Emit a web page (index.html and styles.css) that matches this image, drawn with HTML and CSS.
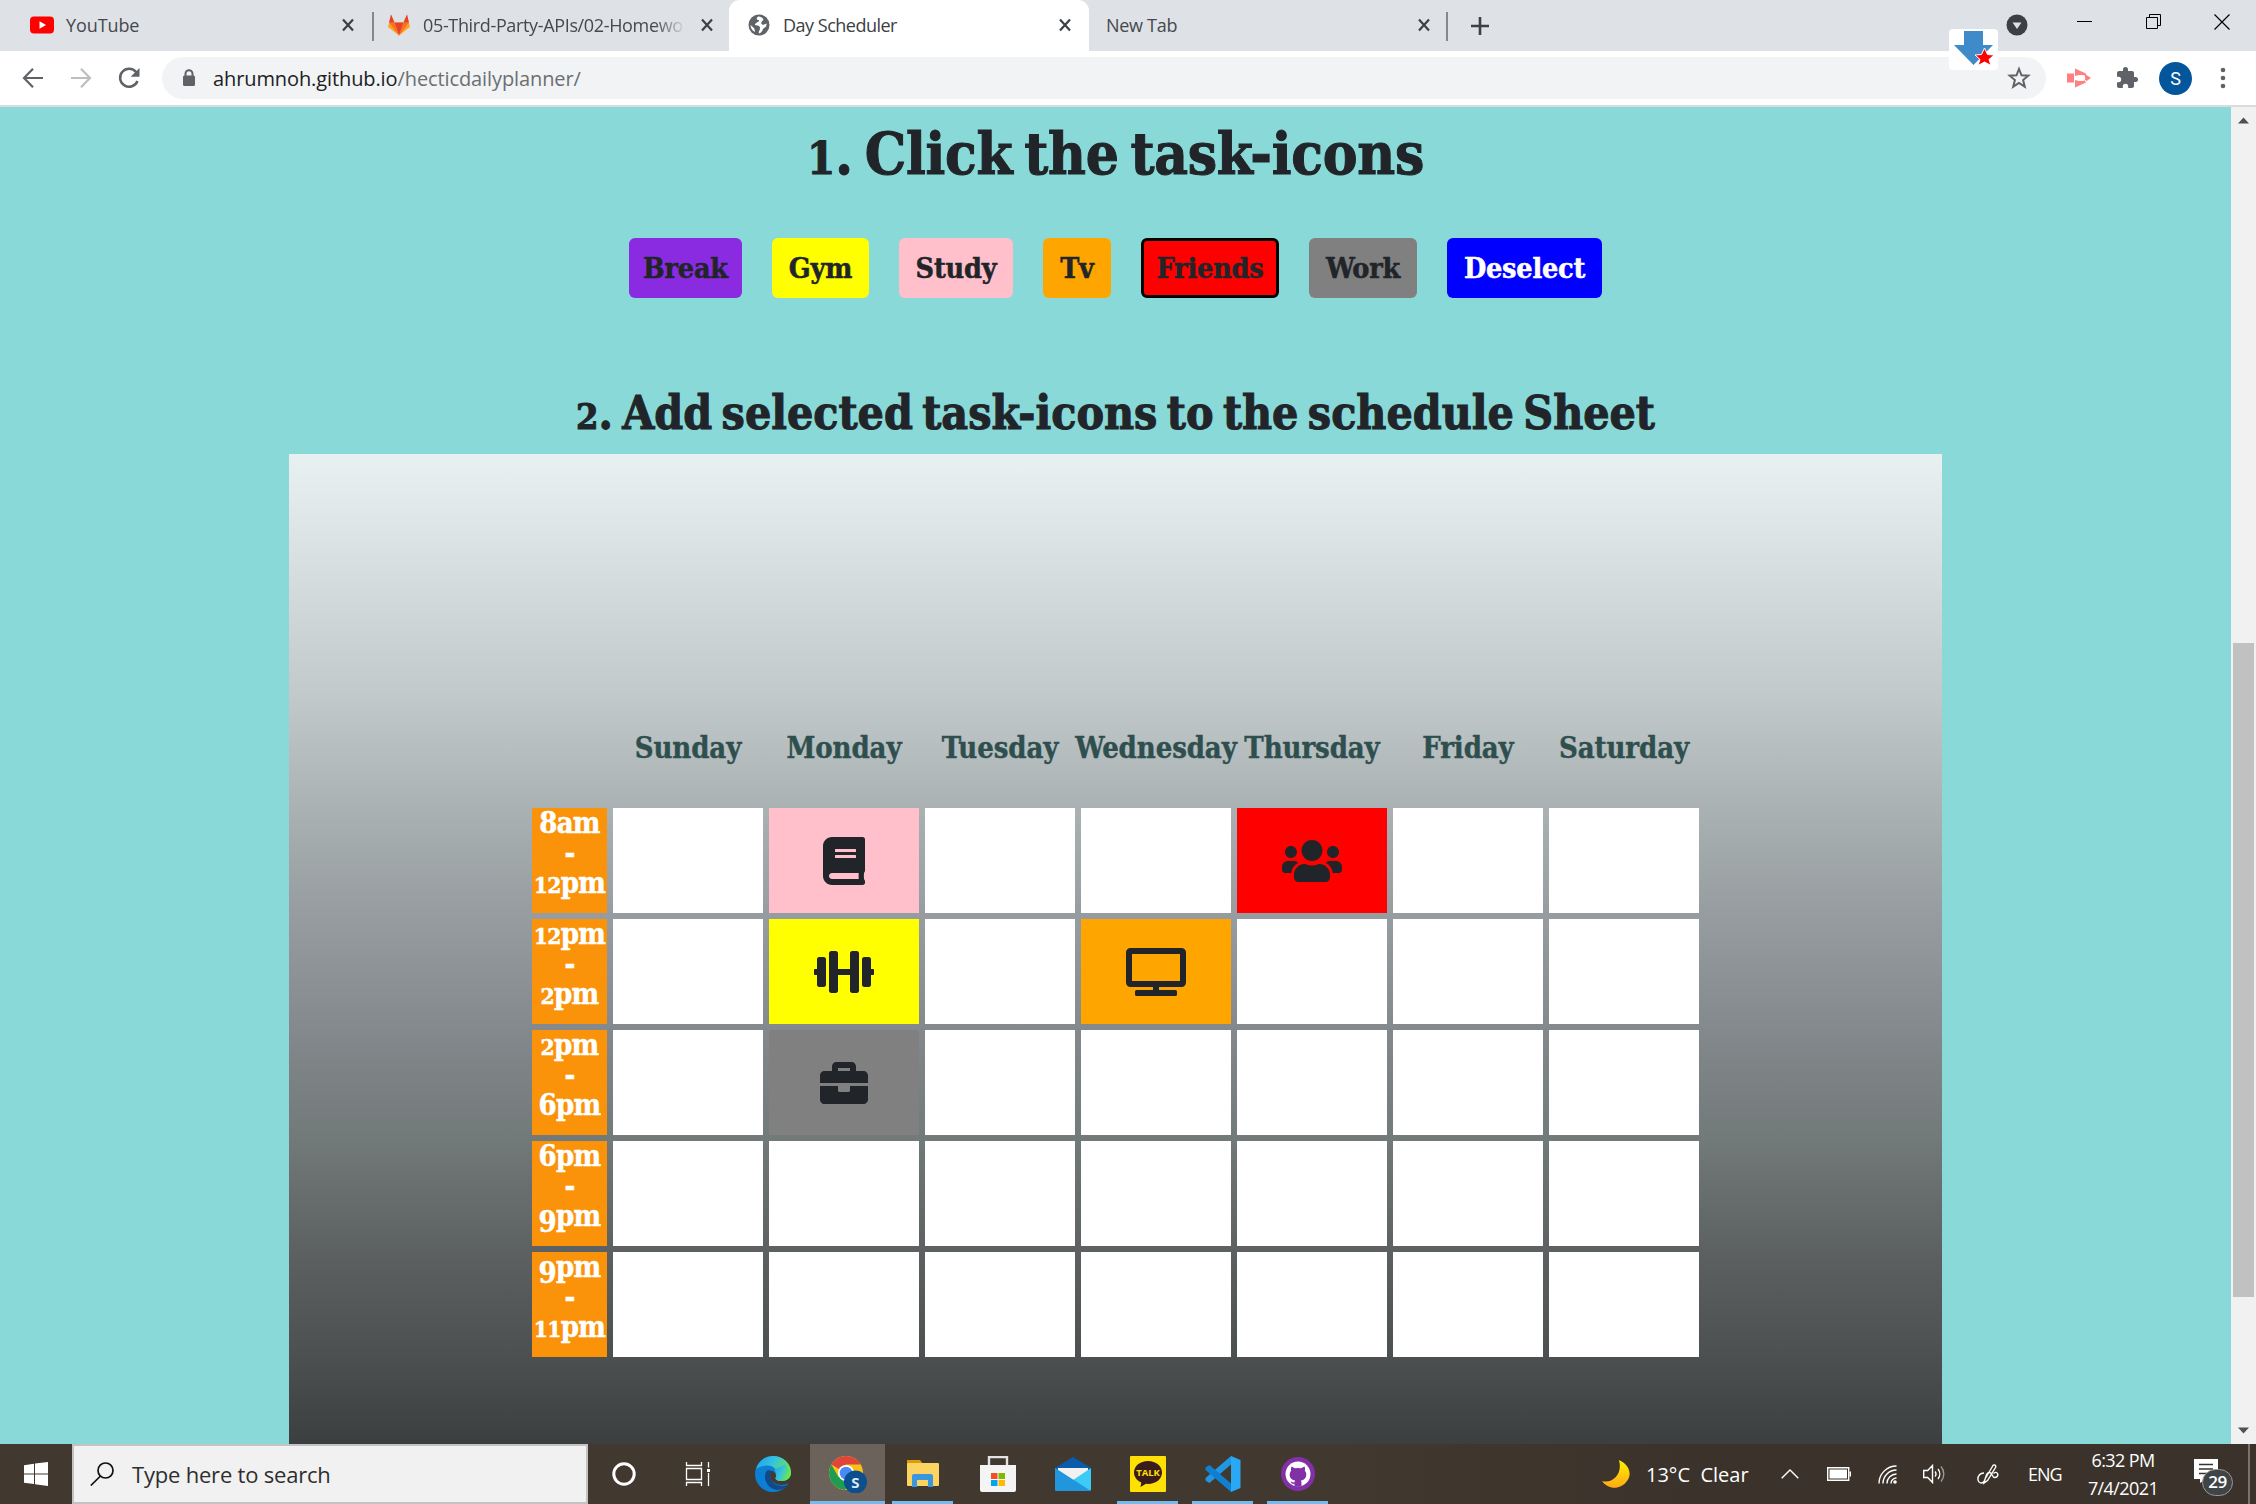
FILE: index.html
```html
<!DOCTYPE html>
<html lang="en">
<head>
<meta charset="utf-8">
<title>Day Scheduler</title>
<link rel="stylesheet" href="styles.css">
</head>
<body>
<svg width="0" height="0" class="defs">
  <defs>
    <symbol id="x" viewBox="0 0 14 14"><path d="M2 1.500L12 12.500M12 1.500L2 12.500" stroke="#3c4043" stroke-width="2.200" fill="none"/></symbol>
    <linearGradient id="edgeTop" x1="0" y1="0" x2="1" y2="0.400"><stop offset="0" stop-color="#1f9fe8"/><stop offset=".5" stop-color="#35c1e0"/><stop offset="1" stop-color="#6ae94a"/></linearGradient>
    <linearGradient id="moonFill" x1="0" y1="0" x2="0" y2="1"><stop offset="0" stop-color="#fff000"/><stop offset="1" stop-color="#ffa914"/></linearGradient>
  </defs>
</svg>

<header class="browser">
  <div class="tabstrip">
    <div class="tab">
      <svg class="fav" viewBox="0 0 24 24"><rect y="3.500" width="24" height="17" rx="4" fill="#f00"/><path d="M9.500 8.200v7.600l6.500-3.800z" fill="#fff"/></svg>
      <span class="tab-name t-yt">YouTube</span>
      <svg class="close"><use href="#x"/></svg>
    </div>
    <div class="tab lined">
      <svg class="fav" viewBox="0 0 24 24"><path d="M12 22.500L1 14 4 1.500 7.500 9.500h9L20 1.500 23 14z" fill="#fca326"/><path d="M12 22.500L7.500 9.500h9z" fill="#e24329"/><path d="M12 22.500L7.500 9.500H2.100zM12 22.500l4.500-13h5.400z" fill="#fc6d26"/><path d="M4 1.500L2.100 9.500h5.400zM20 1.500l1.900 8h-5.400z" fill="#e24329"/></svg>
      <span class="tab-name t-gl fade">05-Third-Party-APIs/02-Homewo</span>
      <svg class="close"><use href="#x"/></svg>
    </div>
    <div class="tab active">
      <svg class="fav" viewBox="0 0 24 24"><circle cx="12" cy="12" r="10.500" fill="#5f6368"/><path d="M11 3.500c-2.500 2.500-1 3.500 1 3.500 0 3-4 2-4 5 2 1 5 0 5 3s-2 3-1 5.500c4-1 3-5 6-6 2-1.500 1.500-4 1.500-4-2 1-4 2-5 .5s1-3 2-4.500C15 4 13 3.300 11 3.500zM3.500 12c1 1 3 2 4 4l.5 3c-3-1.500-4.500-4-4.500-7z" fill="#fff"/></svg>
      <span class="tab-name t-ds">Day Scheduler</span>
      <svg class="close"><use href="#x"/></svg>
    </div>
    <div class="tab newtab">
      <span class="tab-name t-nt">New Tab</span>
      <svg class="close"><use href="#x"/></svg>
    </div>
    <svg class="plus" viewBox="0 0 20 20"><path d="M10 1v18M1 10h18" stroke="#3c4043" stroke-width="2.600"/></svg>
    <div class="window-controls">
      <svg class="drop" viewBox="0 0 22 22"><circle cx="11" cy="11" r="10.500" fill="#3c4043"/><path d="M6.500 8.500h9L11 15z" fill="#dee1e6"/></svg>
      <svg class="ctl" viewBox="0 0 16 16"><path d="M0 7.500h15" stroke="#000"/></svg>
      <svg class="ctl" viewBox="0 0 16 16"><path d="M.5 3.500h11v11H.5zM3.500 3.500v-3h11v11h-3" fill="none" stroke="#000"/></svg>
      <svg class="ctl" viewBox="0 0 16 16"><path d="M.5.5l15 15M15.500.5l-15 15" stroke="#000" stroke-width="1.200"/></svg>
    </div>
  </div>
  <div class="toolbar">
    <svg class="nav" viewBox="0 0 22 22"><path d="M21 11H2M11 1.800L2 11l9 9.200" fill="none" stroke="#5f6368" stroke-width="2.200"/></svg>
    <svg class="nav" viewBox="0 0 22 22"><path d="M1 11h19M11 1.800L20 11l-9 9.200" fill="none" stroke="#bcbec1" stroke-width="2.200"/></svg>
    <svg class="nav" viewBox="0 0 22 22"><path d="M18.200 5.200A9 9 0 1 0 19.500 14" fill="none" stroke="#5f6368" stroke-width="2.500"/><path d="M21.500 1v8.800h-8.800z" fill="#5f6368"/></svg>
    <div class="omnibox">
      <svg class="lock" viewBox="0 0 14 18"><path d="M3.500 7V4.800a3.500 3.500 0 0 1 7 0V7" fill="none" stroke="#5f6368" stroke-width="2"/><rect x="1" y="6.500" width="12" height="10.500" rx="1.500" fill="#5f6368"/></svg>
      <span class="url">ahrumnoh.github.io<span class="path">/hecticdailyplanner/</span></span>
      <svg class="star" viewBox="0 0 24 24"><path d="M12 3l2.500 6.300 6.800.4-5.200 4.400 1.700 6.600-5.800-3.700-5.800 3.700 1.700-6.600L2.700 9.700l6.800-.4z" fill="none" stroke="#5f6368" stroke-width="2"/></svg>
    </div>
    <svg class="ext" viewBox="0 0 24 20"><path d="M0 5.500h7v9H0zM8 .5l11 5v2.500l-3-1h-4L8 8zM8 19.500l11-5V12l-3 1h-4L8 12zM18 6l6 4-6 4z" fill="#ff8080"/></svg>
    <svg class="puzzle" viewBox="1 1 22 22"><path d="M20.500 11H19V7c0-1.100-.9-2-2-2h-4V3.500a2.500 2.500 0 0 0-5 0V5H4c-1.100 0-2 .9-2 2v3.800h1.500a2.700 2.700 0 0 1 0 5.400H2V20c0 1.100.9 2 2 2h3.800v-1.500a2.700 2.700 0 0 1 5.400 0V22H17c1.100 0 2-.9 2-2v-4h1.500a2.500 2.500 0 0 0 0-5z" fill="#5f6368"/></svg>
    <span class="avatar">S</span>
    <svg class="dots" viewBox="0 0 6 22"><circle cx="3" cy="3" r="2.300"/><circle cx="3" cy="11" r="2.300"/><circle cx="3" cy="19" r="2.300"/></svg>
  </div>
  <svg class="download-badge" viewBox="0 0 49 41"><rect width="49" height="41" rx="4" fill="#fff"/><path d="M15 2h19v14h10L24.500 36 5 16h10z" fill="#3f8ac9"/><path d="M35.500 19l3 6.500 6.500.5-5 4.500 2 6-6.500-3.500-6.500 3.500 2-6-5-4.500 6.500-.5z" fill="red" stroke="#fff"/></svg>
</header>

<div class="viewport">
  <main class="page">
    <h1 class="step-one"><span class="fig">1</span>. Click the task-icons</h1>
    <div class="tasks">
      <button class="task break">Break</button>
      <button class="task gym">Gym</button>
      <button class="task study">Study</button>
      <button class="task tv">Tv</button>
      <button class="task friends selected">Friends</button>
      <button class="task work">Work</button>
      <button class="task deselect">Deselect</button>
    </div>
    <h2 class="step-two"><span class="fig">2</span>. Add selected task-icons to the schedule Sheet</h2>
    <section class="sheet">
      <div class="days">
        <span></span><span>Sunday</span><span>Monday</span><span>Tuesday</span><span>Wednesday</span><span>Thursday</span><span>Friday</span><span>Saturday</span>
      </div>
      <div class="grid">
        <div class="time">8am<br>-<br><span class="fig">12</span>pm</div>
        <div class="cell"></div>
        <div class="cell study"><svg width="42" height="48" viewBox="0 0 448 512"><path d="M448 360V24c0-13.300-10.700-24-24-24H96C43 0 0 43 0 96v320c0 53 43 96 96 96h328c13.300 0 24-10.700 24-24v-16c0-7.500-3.500-14.300-8.900-18.700-4.200-15.400-4.200-59.300 0-74.700 5.400-4.300 8.900-11.100 8.900-18.600zM128 134c0-3.300 2.700-6 6-6h212c3.300 0 6 2.700 6 6v20c0 3.300-2.700 6-6 6H134c-3.300 0-6-2.700-6-6v-20zm0 64c0-3.300 2.700-6 6-6h212c3.300 0 6 2.700 6 6v20c0 3.300-2.700 6-6 6H134c-3.300 0-6-2.700-6-6v-20zm253.400 250H96c-17.700 0-32-14.300-32-32 0-17.600 14.400-32 32-32h285.400c-1.900 17.100-1.900 46.900 0 64z"/></svg></div>
        <div class="cell"></div>
        <div class="cell"></div>
        <div class="cell friends"><svg width="60" height="48" viewBox="0 0 640 512"><path d="M96 224c35.300 0 64-28.700 64-64s-28.700-64-64-64-64 28.700-64 64 28.700 64 64 64zm448 0c35.300 0 64-28.700 64-64s-28.700-64-64-64-64 28.700-64 64 28.700 64 64 64zm32 32h-64c-17.600 0-33.500 7.100-45.100 18.600 40.300 22.100 68.900 62 75.100 109.400h66c17.700 0 32-14.300 32-32v-32c0-35.300-28.700-64-64-64zm-256 0c61.900 0 112-50.100 112-112S381.900 32 320 32 208 82.100 208 144s50.100 112 112 112zm76.800 32h-8.300c-20.800 10-43.900 16-68.500 16s-47.600-6-68.500-16h-8.300C179.600 288 128 339.600 128 403.200V432c0 26.500 21.500 48 48 48h288c26.500 0 48-21.500 48-48v-28.800c0-63.600-51.600-115.200-115.200-115.200zm-223.700-13.400C161.500 263.100 145.600 256 128 256H64c-35.300 0-64 28.700-64 64v32c0 17.700 14.300 32 32 32h65.900c6.300-47.400 34.900-87.300 75.200-109.400z"/></svg></div>
        <div class="cell"></div>
        <div class="cell"></div>

        <div class="time"><span class="fig">12</span>pm<br>-<br><span class="fig">2</span>pm</div>
        <div class="cell"></div>
        <div class="cell gym"><svg width="60" height="48" viewBox="0 0 640 512"><path d="M104 96H56c-13.300 0-24 10.700-24 24v104H8c-4.400 0-8 3.600-8 8v48c0 4.400 3.600 8 8 8h24v104c0 13.300 10.700 24 24 24h48c13.300 0 24-10.700 24-24V120c0-13.300-10.700-24-24-24zm528 128h-24V120c0-13.300-10.700-24-24-24h-48c-13.300 0-24 10.700-24 24v272c0 13.300 10.700 24 24 24h48c13.300 0 24-10.700 24-24V288h24c4.400 0 8-3.600 8-8v-48c0-4.400-3.600-8-8-8zM456 32h-48c-13.300 0-24 10.700-24 24v168H256V56c0-13.300-10.700-24-24-24h-48c-13.300 0-24 10.700-24 24v400c0 13.300 10.700 24 24 24h48c13.300 0 24-10.700 24-24V288h128v168c0 13.300 10.700 24 24 24h48c13.300 0 24-10.700 24-24V56c0-13.300-10.700-24-24-24z"/></svg></div>
        <div class="cell"></div>
        <div class="cell tv"><svg width="60" height="48" viewBox="0 0 640 512"><path d="M592 0H48A48 48 0 0 0 0 48v320a48 48 0 0 0 48 48h240v32H112a16 16 0 0 0-16 16v32a16 16 0 0 0 16 16h416a16 16 0 0 0 16-16v-32a16 16 0 0 0-16-16H352v-32h240a48 48 0 0 0 48-48V48a48 48 0 0 0-48-48zm-16 352H64V64h512z"/></svg></div>
        <div class="cell"></div>
        <div class="cell"></div>
        <div class="cell"></div>

        <div class="time"><span class="fig">2</span>pm<br>-<br>6pm</div>
        <div class="cell"></div>
        <div class="cell work"><svg width="48" height="48" viewBox="0 0 512 512"><path d="M320 336c0 8.840-7.160 16-16 16h-96c-8.840 0-16-7.160-16-16v-48H0v144c0 25.600 22.400 48 48 48h416c25.600 0 48-22.400 48-48V288H320v48zm144-208h-80V80c0-25.600-22.400-48-48-48H176c-25.600 0-48 22.400-48 48v48H48c-25.600 0-48 22.400-48 48v80h512v-80c0-25.600-22.400-48-48-48zm-144 0H192V96h128v32z"/></svg></div>
        <div class="cell"></div>
        <div class="cell"></div>
        <div class="cell"></div>
        <div class="cell"></div>
        <div class="cell"></div>

        <div class="time">6pm<br>-<br><span class="low">9</span>pm</div>
        <div class="cell"></div><div class="cell"></div><div class="cell"></div><div class="cell"></div><div class="cell"></div><div class="cell"></div><div class="cell"></div>

        <div class="time"><span class="low">9</span>pm<br>-<br><span class="fig">11</span>pm</div>
        <div class="cell"></div><div class="cell"></div><div class="cell"></div><div class="cell"></div><div class="cell"></div><div class="cell"></div><div class="cell"></div>
      </div>
    </section>
  </main>
  <div class="scrollbar">
    <svg width="11" height="7" viewBox="0 0 11 7"><path d="M0 6.500L5.500.5l5.500 6z" fill="#505050"/></svg>
    <div class="thumb"></div>
    <svg class="down" width="11" height="7" viewBox="0 0 11 7"><path d="M0 .5h11l-5.500 6z" fill="#505050"/></svg>
  </div>
</div>

<footer class="taskbar">
  <div class="start"><svg width="24" height="24" viewBox="0 0 24 24"><path d="M0 3.200L10 1.800v9.600H0zM11 1.600L24 0v11.400H11zM0 12.400h10v9.700L0 20.700zM11 12.400h13V24l-13-1.700z" fill="#fff"/></svg></div>
  <div class="search">
    <svg width="24" height="24" viewBox="0 0 24 24"><circle cx="15.500" cy="8.500" r="7.500" fill="none" stroke="#111" stroke-width="1.700"/><path d="M10.500 14L.8 23.500" stroke="#111" stroke-width="1.700"/></svg>
    <span>Type here to search</span>
  </div>
  <div class="apps">
    <div class="app narrow"><svg width="24" height="24" viewBox="0 0 24 24"><circle cx="12" cy="12" r="10.200" fill="none" stroke="#fff" stroke-width="3"/></svg></div>
    <div class="app view"><svg width="26" height="24" viewBox="0 0 26 24"><path d="M1.500 0v3.500h15V0M1.500 24v-3.500h15V24M1.500 6.500h15v11h-15zM23.500 0v5.500M23.500 11v13" fill="none" stroke="#fff" stroke-width="1.300"/><path d="M22 7h3v3h-3z" fill="#fff"/></svg></div>
    <div class="app"><svg width="36" height="36" viewBox="0 0 36 36"><circle cx="18" cy="18" r="18" fill="#0b7fd3"/><path d="M1 13C4 4 11 0 18 0c10 0 18 7.500 18 16 0 6-4 9-9.500 9-4 0-6.500-1.500-6-3 3-2.500 2-12.500-8.500-12.500C7 9.500 3 12 1 13z" fill="url(#edgeTop)"/><path d="M12 14.500c-4 5-2 14 5 18 6 3 12 1 16.500-4-6 3-14 1-17-4-1.500-3-1.500-6 0-9-1.500-1.500-3-2-4.500-1z" fill="#114a8b"/><path d="M16.500 14.500c-2 3-2 8 1 11 4 4 11 4.500 16.500 1.500l2-3v-5c-2 5-6 6-9.500 6-4 0-6.500-1.500-6-3 1.500-2 0-6-4-7.500z" fill="#433931"/><path d="M19 14c2.500 2 2.500 6 1.500 8-.5 1.500 2 3 6 3 5.500 0 9.500-3 9.500-9l-6-8z" fill="url(#edgeTop)"/></svg></div>
    <div class="app current open"><svg width="38" height="38" viewBox="0 0 38 38"><circle cx="17" cy="18" r="17" fill="#fbc116"/><path d="M17 1a17 17 0 0 1 14.700 8.500H17L10 14 2.300 9.500A17 17 0 0 1 17 1z" fill="#e0453a"/><path d="M2.300 9.500A17 17 0 0 0 16 35l7-13-13.500 0z" fill="#1e9c50"/><circle cx="17" cy="18" r="8" fill="#fff"/><circle cx="17" cy="18" r="6.300" fill="#4a8af4"/><circle cx="26.500" cy="27" r="11.500" fill="#0b4f8f"/><text x="26.500" y="32.500" text-anchor="middle" class="badge-s">S</text></svg></div>
    <div class="app open wide"><svg width="34" height="28" viewBox="0 0 34 28"><path d="M1 0h13l3 4H1z" fill="#e09c08"/><rect x="1" y="3" width="32" height="23" rx="1" fill="#fcd462"/><path d="M6 26V16a2 2 0 0 1 2-2h17a2 2 0 0 1 2 2v11h-5v-7H11v7H6z" fill="#3a96dd"/></svg></div>
    <div class="app"><svg width="36" height="36" viewBox="0 0 36 36"><path d="M9 11V1h18v10" fill="none" stroke="#e3e3e3" stroke-width="2.400"/><path d="M0 9h36v25a2 2 0 0 1-2 2H2a2 2 0 0 1-2-2z" fill="#f4f4f4"/><path d="M11 17h6.500v6H11z" fill="#f25022"/><path d="M18.500 17H25v6h-6.500z" fill="#7fba00"/><path d="M11 24h6.500v6H11z" fill="#00a4ef"/><path d="M18.500 24H25v6h-6.500z" fill="#ffb900"/></svg></div>
    <div class="app"><svg width="36" height="34" viewBox="0 0 36 34"><path d="M0 11L18 0l18 11v4H0z" fill="#0a5bab"/><path d="M3 11h30v12H3z" fill="#f1f1f1"/><path d="M0 11l18 12L36 11v21a2 2 0 0 1-2 2H2a2 2 0 0 1-2-2z" fill="#3ccbf4"/><path d="M0 11l36 23H2a2 2 0 0 1-2-2z" fill="#2196dc"/></svg></div>
    <div class="app open wide"><svg width="36" height="36" viewBox="0 0 36 36"><rect width="36" height="36" rx="1" fill="#fee102"/><path d="M18 5c8 0 14 5 14 11.500S26 28 18 28l-2-.2L10.500 31l.8-4.400C7 24.500 4 21 4 16.500 4 10 10 5 18 5z" fill="#3b1c1c"/><text x="18" y="20.300" text-anchor="middle" class="talk">TALK</text></svg></div>
    <div class="app open wide"><svg width="36" height="36" viewBox="0 0 36 36"><path d="M26 8.500L4.500 27 .5 24.500V22L26 0z" fill="#2196e3"/><path d="M26 27.500L4.500 9 .5 11.500V14L26 36z" fill="#0f7fcf"/><path d="M26 0l9.500 4v28L26 36z" fill="#2ba8f5"/></svg></div>
    <div class="app open wide"><svg width="34" height="34" viewBox="0 0 34 34"><circle cx="17" cy="17" r="17" fill="#8330a8"/><circle cx="17" cy="17" r="12.500" fill="#fff"/><path d="M10.500 9.500l3.500 1.800a14 14 0 0 1 6 0l3.500-1.800c.8 2 .6 3 .3 4 3.500 5 .5 9.500-4 10 .8 1 .7 2 .7 5.700a12.500 12.500 0 0 1-7 0V26.800c-2.500.4-3.300-.8-4-2.300 1.700 0 2 1.200 4 .8 0-.8.300-1.300.7-1.800-4.500-.5-7.500-5-4-10-.3-1-.5-2 .3-4z" fill="#8330a8"/></svg></div>
  </div>
  <div class="tray">
    <svg class="moon" viewBox="0 0 28 28"><path d="M17 0c9 4 14 13 8 21-6 9-19 9-25 0 10 3 21-6 17-21z" fill="url(#moonFill)"/></svg>
    <span class="weather">13°C&nbsp; Clear</span>
    <svg class="chev" viewBox="0 0 18 10"><path d="M.7 9.300L9 1l8.300 8.300" class="ln"/></svg>
    <svg class="batt" viewBox="0 0 24 14"><path d="M.7.7h21v12.600H.7z" class="ln"/><path d="M2.500 2.500h17.500v9H2.500zM22.500 4.500H24v5h-1.500z" fill="#fff"/></svg>
    <svg class="wifi" viewBox="0 0 19 19"><path d="M1 18.500A17.500 17.500 0 0 1 18.500 1M5 18.500A13.500 13.500 0 0 1 18.500 5M9 18.500A9.500 9.500 0 0 1 18.500 9M13 18.500a5.500 5.500 0 0 1 5.500-5.500" class="ln thin"/><circle cx="17" cy="17" r="1.800" fill="#fff"/></svg>
    <svg class="vol" viewBox="0 0 22 20"><path d="M.7 6.500h4L9.500 1.500v17L4.700 13.500h-4zM12 7.500a4 4 0 0 1 0 5M15 5a8 8 0 0 1 0 10" class="ln"/><path d="M18 2.500a11.500 11.500 0 0 1 0 15" class="ln dim"/></svg>
    <svg class="pen" viewBox="0 0 22 22"><path d="M8 16L16 2.500c1-1.500 3.500 0 2.500 2L10.500 17.500 7 20zM7 10c-4 0-6.500 3-6 7 .5 3 4 4 6 1.500S8.500 10 12 9.500s3 5 5.500 5 4-2 3-4-3-1-4 0" class="ln"/></svg>
    <span class="lang">ENG</span>
    <span class="clock"><span>6:32 PM</span><span class="date">7/4/2021</span></span>
    <span class="notify"><svg viewBox="0 0 24 24"><path d="M0 0h24v20H12l-6 4v-4H0z" fill="#fff"/><path d="M5 5.500h14M5 10h14M5 14.500h9" stroke="#3b332b" stroke-width="1.500"/></svg><span class="count">29</span></span>
    <span class="peek"></span>
  </div>
</footer>
</body>
</html>
```
FILE: styles.css
```css
* { box-sizing: border-box; }
body {
  margin: 0;
  width: 2256px;
  height: 1504px;
  overflow: hidden;
  display: flex;
  flex-direction: column;
  font-family: "Open Sans", "Noto Sans", sans-serif;
}
svg { display: block; flex: none; }
.defs { position: absolute; }

/* browser chrome */
.browser { height: 107px; background: #fff; border-bottom: 2px solid #d9dbdf; position: relative; flex: none; }
.tabstrip { height: 51px; background: #dee1e6; display: flex; align-items: center; padding-left: 14px; }
.tab { width: 358px; height: 51px; display: flex; align-items: center; padding: 0 17px 1px 16px; color: #45494d; font-size: 18px; }
.tab.lined { padding-left: 15px; width: 357px; background: linear-gradient(#85888c, #85888c) 0 12px / 2px 29px no-repeat; padding-right: 15px; }
.tab.active { width: 360px; background: #fff; border-radius: 11px 11px 0 0; padding-left: 18px; color: #3c4043; }
.tab.newtab { padding-left: 17px; width: 359px; background: linear-gradient(#85888c, #85888c) 100% 12px / 2px 29px no-repeat; }
.fav { width: 24px; height: 24px; margin-right: 12px; }
.tab-name { flex: 1; white-space: nowrap; margin-right: 14px; }
.fade { -webkit-mask-image: linear-gradient(90deg, #000 88%, transparent); mask-image: linear-gradient(90deg, #000 88%, transparent); }
.t-yt { letter-spacing: -0.1px; }
.t-gl { letter-spacing: -0.35px; }
.t-ds { letter-spacing: -0.5px; }
.t-nt { letter-spacing: -0.3px; }
.close { width: 14px; height: 14px; }
.plus { width: 20px; height: 20px; margin-left: 22px; }
.window-controls { margin-left: auto; display: flex; align-items: flex-start; padding: 0 26px 0 0; height: 51px; }
.drop { width: 22px; height: 22px; margin-top: 14px; margin-right: 49px; }
.ctl { width: 16px; height: 16px; margin-top: 14px; margin-left: 52.500px; }
.drop + .ctl { margin-left: 0; }

.toolbar { height: 54px; display: flex; align-items: center; padding-left: 22px; }
.nav { width: 22px; height: 22px; margin-right: 26px; }
.nav + .nav + .nav { margin-right: 22px; }
.omnibox { width: 1884px; height: 42px; border-radius: 21px; background: #f1f3f4; display: flex; align-items: center; padding: 0 15px 0 20px; }
.lock { width: 14px; height: 18px; }
.url { margin-left: 17px; font-size: 20px; color: #202124; letter-spacing: -0.1px; flex: 1; }
.path { color: #6b6f73; }
.star { width: 24px; height: 24px; }
.ext { width: 24px; height: 20px; margin-left: 21px; }
.puzzle { width: 22px; height: 22px; margin-left: 25px; }
.avatar { width: 33px; height: 33px; border-radius: 50%; background: #04569c; color: #fff; font: 18px/33px Roboto, sans-serif; text-align: center; margin-left: 21px; }
.dots { width: 6px; height: 22px; margin-left: 28px; fill: #5f6368; }
.download-badge { position: absolute; left: 1949px; top: 29px; width: 49px; height: 41px; }

/* planner page */
.viewport { height: 1337px; display: flex; flex: none; }
.page { width: 2231px; background: #88d9d8; display: flex; flex-direction: column; align-items: center; overflow: hidden; color: #212529; font-family: "DejaVu Serif Condensed", "DejaVu Serif", serif; font-stretch: condensed; font-weight: bold; }
.page h1, .page h2 { margin: 0; white-space: nowrap; font-weight: bold; -webkit-text-stroke: 1px #212529; }
.page .step-one { font-size: 58px; line-height: 72px; letter-spacing: -0.3px; word-spacing: -6px; padding-top: 11px; height: 131px; }
.page .step-two { font-size: 46px; line-height: 60px; letter-spacing: 0; word-spacing: -5px; margin-top: 77px; padding-top: 8px; height: 79px; }
.fig { font-size: 0.78em; line-height: 0; }
.low { vertical-align: -0.2em; line-height: 0; }
.tasks { display: flex; gap: 30px; }
.task { height: 60px; border: 3px solid transparent; border-radius: 6px; padding: 0; font: inherit; font-size: 28.500px; letter-spacing: -0.2px; color: #212529; text-align: center; -webkit-text-stroke: 0.5px; }
.task.break { width: 113px; background: blueviolet; }
.task.gym { width: 97px; background: yellow; }
.task.study { width: 114px; background: pink; }
.task.tv { width: 68px; background: orange; }
.task.friends { width: 138px; background: red; }
.task.work { width: 108px; background: gray; }
.task.deselect { width: 155px; background: blue; color: #fff; }
.task:not(.selected) { border: 0; }
.task.selected { border-color: #000; }

.sheet {
  width: 1653px;
  flex: 1;
  padding: 274px 0 0 243px;
  background: linear-gradient(#e8f1f2 0, #e4ecee 30px, #c0c8ca 246px, #abb3b4 346px, #969c9f 460px, #83898c 576px, #727979 686px, #5c6060 800px, #4e5151 896px, #3c3f40 990px);
}
.days, .grid { display: grid; grid-template-columns: 75px repeat(7, 150px); gap: 6px; }
.days { height: 80px; line-height: 41px; font-size: 29px; letter-spacing: -0.1px; color: #2f4f4f; -webkit-text-stroke: 0.4px; }
.days span { display: flex; justify-content: center; white-space: nowrap; }
.grid { grid-auto-rows: 105px; }
.time { background: #fa920a; color: #fff; text-align: center; font-size: 29px; line-height: 30px; letter-spacing: -0.700px; white-space: nowrap; -webkit-text-stroke: 0.5px; }
.cell { background: #fff; display: flex; align-items: center; justify-content: center; fill: #212529; }
.cell.study { background: pink; }
.cell.gym { background: yellow; }
.cell.tv { background: orange; }
.cell.friends { background: red; }
.cell.work { background: gray; }

.scrollbar { width: 25px; background: #f1f1f1; display: flex; flex-direction: column; align-items: center; padding-top: 10px; }
.thumb { width: 21px; height: 654px; background: #c1c1c1; margin-top: 519px; }
.down { margin-top: 130px; }

/* taskbar */
.taskbar { height: 60px; background: linear-gradient(90deg, #41382f 60%, #3b332b 75%); display: flex; align-items: stretch; color: #fff; }
.start { width: 72px; display: flex; align-items: center; justify-content: center; }
.search { width: 516px; background: #f1f1f1; border: 2px solid #c3c3c3; display: flex; align-items: center; padding-left: 16px; gap: 18px; color: #2e2e2e; font-size: 22px; letter-spacing: -0.2px; }
.apps { display: flex; }
.app { width: 75px; display: flex; align-items: center; justify-content: center; position: relative; }
.narrow { width: 72px; }
.view { width: 75px; }
.current { background: #6b625c; }
.open::after { content: ""; position: absolute; left: 0; right: 0; bottom: 0; height: 3px; background: #76b9ed; }
.wide::after { left: 7px; right: 7px; }
.badge-s { font: bold 15px "Open Sans", sans-serif; fill: #dce8f2; }
.talk { font: bold 9.500px "Open Sans", sans-serif; fill: #fee102; }
.tray { margin-left: auto; width: 654px; display: flex; align-items: center; }
.moon { width: 28px; height: 28px; }
.weather { width: 104px; margin-left: 16px; font-size: 20px; letter-spacing: 0; white-space: nowrap; }
.chev { width: 18px; height: 10px; margin-left: 31px; }
.batt { width: 24px; height: 14px; margin-left: 28px; }
.wifi { width: 19px; height: 19px; margin-left: 27px; }
.vol { width: 22px; height: 20px; margin-left: 26px; }
.pen { width: 22px; height: 22px; margin-left: 32px; }
.ln { fill: none; stroke: #fff; stroke-width: 1.400; }
.dim { opacity: 0.5; }
.lang { width: 36px; margin-left: 29px; font-size: 18px; letter-spacing: -1px; }
.clock { width: 72px; margin-left: 23px; font-size: 18px; letter-spacing: -0.6px; line-height: 28px; display: flex; flex-direction: column; align-items: center; white-space: nowrap; }
.notify { width: 24px; height: 24px; margin-left: 35px; margin-top: -7px; position: relative; }
.count { position: absolute; left: 8px; top: 10px; width: 31px; height: 27px; border-radius: 14px; border: 1px solid #999; background: #3f4447; font-size: 17px; line-height: 24px; font-weight: 600; text-align: center; letter-spacing: -0.5px; }
.peek { margin-left: auto; margin-right: 6px; width: 2px; height: 60px; background: #7a746c; }
```
